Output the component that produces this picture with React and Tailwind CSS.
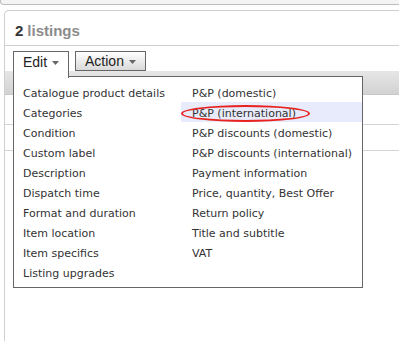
const leftItems = [
  "Catalogue product details",
  "Categories",
  "Condition",
  "Custom label",
  "Description",
  "Dispatch time",
  "Format and duration",
  "Item location",
  "Item specifics",
  "Listing upgrades",
];

const rightItems = [
  "P&P (domestic)",
  "P&P (international)",
  "P&P discounts (domestic)",
  "P&P discounts (international)",
  "Payment information",
  "Price, quantity, Best Offer",
  "Return policy",
  "Title and subtitle",
  "VAT",
];

function Caret() {
  return (
    <svg width="7" height="4" viewBox="0 0 7 4" className="ml-[5px] mt-[1px]">
      <path d="M0 0h7L3.5 4z" fill="#666" />
    </svg>
  );
}

export default function App() {
  return (
    <div className="relative h-[341px] w-[399px] overflow-hidden bg-white font-['Liberation_Sans',Arial,sans-serif]">
      {/* previous panel bottom */}
      <div className="h-[5px] rounded-bl-[4px] border-b border-l border-[#bdbdbd] bg-[#f4f4f4]" />

      <div className="ml-[4px] mt-[5px] h-[340px] rounded-tl-[5px] border-l border-t border-[#cfcfcf]">
        <div className="flex h-[35px] items-center border-b border-[#cfcfcf] pl-[10px] pt-[6px] text-[15px] font-bold">
          <span className="text-[#333]">2</span>
          <span className="ml-[4px] text-[#8c8c8c]">listings</span>
        </div>

        <div className="flex items-start gap-[6px] pl-[8px] pt-[5px] text-[14px] text-[#222]">
          <div className="relative z-20 h-[27px] w-[56px] border border-b-0 border-[#666] bg-white">
            <div className="flex h-[19px] items-center justify-center pt-[1px]">
              <span className="leading-[17px]">Edit</span>
              <Caret />
            </div>
          </div>
          <div className="flex h-[20px] w-[71px] items-center justify-center border border-[#666] bg-gradient-to-b from-white to-[#d9d9d9]">
            <span className="leading-[17px]">Action</span>
            <Caret />
          </div>
        </div>

        {/* table behind the menu */}
        <div className="-mt-[7px]">
          <div className="h-[24px] border-b border-[#c8c8c8] bg-gradient-to-b from-[#e6e6e6] to-[#d2d2d2]" />
          <div className="h-[30px] border-b border-[#d4d4d4]" />
          <div className="h-[26px] border-b border-[#d4d4d4]" />
        </div>
      </div>

      {/* Edit dropdown */}
      <div className="absolute left-[13px] top-[76px] z-10 flex h-[212px] w-[350px] border border-[#666] bg-white pt-[5px] font-['DejaVu_Sans',Verdana,sans-serif] text-[11px] text-[#333]">
        <div className="w-[167px]">
          {leftItems.map((item) => (
            <div key={item} className="h-[20px] whitespace-nowrap pl-[9px] leading-[23px]">
              {item}
            </div>
          ))}
        </div>
        <div className="flex-1">
          {rightItems.map((item) => (
            <div
              key={item}
              className={
                item === "P&P (international)"
                  ? "relative h-[20px] whitespace-nowrap bg-[#e8ebfb] pl-[11px] leading-[23px]"
                  : "h-[20px] whitespace-nowrap pl-[11px] leading-[23px]"
              }
            >
              {item}
              {item === "P&P (international)" ? (
                <div className="absolute left-[0px] top-[3px] h-[17px] w-[129px] rounded-[50%] border-2 border-[#e8231f]" />
              ) : null}
            </div>
          ))}
        </div>
      </div>
    </div>
  );
}
